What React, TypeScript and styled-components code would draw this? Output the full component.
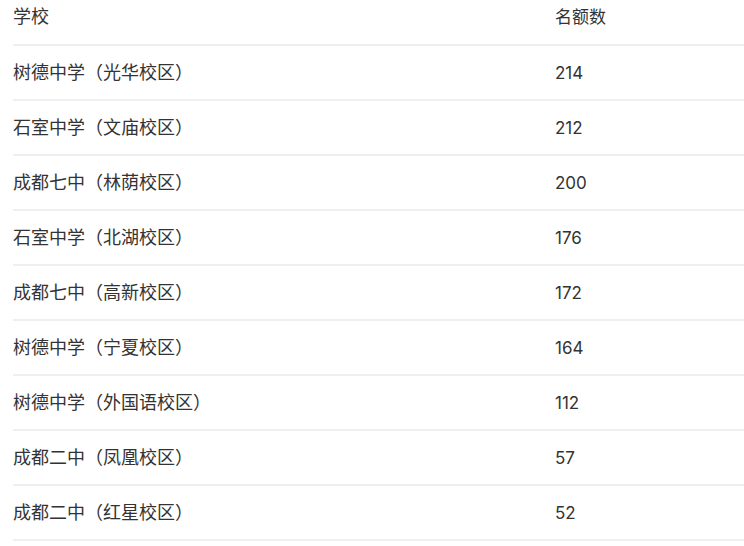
import React from "react";
import styled, { createGlobalStyle } from "styled-components";

const Global = createGlobalStyle`
  html, body { margin: 0; padding: 0; background: #fff; }
  body { font-family: Inter, "Noto Sans CJK SC", sans-serif; color: #333; overflow: hidden; }
`;

const Wrap = styled.div`
  padding-left: 13px;
  width: 760px;
`;

const Row = styled.div<{ $head?: boolean }>`
  display: grid;
  grid-template-columns: 542px 1fr;
  align-items: center;
  height: ${(p) => (p.$head ? "34px" : "53px")};
  padding-bottom: ${(p) => (p.$head ? "10px" : "0")};
  border-bottom: 2px solid #efefef;
  line-height: 24px;
`;

const Cell = styled.div<{ $size?: number }>`
  white-space: nowrap;
  font-size: ${(p) => p.$size ?? 17}px;
`;

const data: [string, number][] = [
  ["树德中学（光华校区）", 214],
  ["石室中学（文庙校区）", 212],
  ["成都七中（林荫校区）", 200],
  ["石室中学（北湖校区）", 176],
  ["成都七中（高新校区）", 172],
  ["树德中学（宁夏校区）", 164],
  ["树德中学（外国语校区）", 112],
  ["成都二中（凤凰校区）", 57],
  ["成都二中（红星校区）", 52],
];

export default function App() {
  return (
    <>
      <Global />
      <Wrap>
        <Row $head>
          <Cell $size={18}>学校</Cell>
          <Cell>名额数</Cell>
        </Row>
        {data.map(([name, n]) => (
          <Row key={name}>
            <Cell $size={18}>{name}</Cell>
            <Cell>{n}</Cell>
          </Row>
        ))}
      </Wrap>
    </>
  );
}
